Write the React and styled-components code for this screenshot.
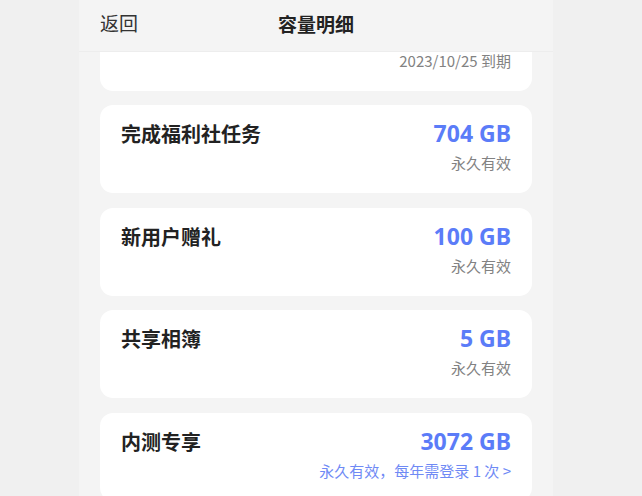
import React from "react";
import styled, { createGlobalStyle } from "styled-components";

const Global = createGlobalStyle`
  html, body { margin: 0; padding: 0; background: #f0f0f0; }
  body { font-family: "Noto Sans", "Noto Sans CJK SC", sans-serif; overflow: hidden; }
`;

const Page = styled.div`
  width: 642px;
  height: 496px;
  box-sizing: border-box;
  padding-left: 79px;
  display: flex;
  background: #f0f0f0;
  overflow: hidden;
`;

const Column = styled.div`
  position: relative;
  width: 474px;
  height: 496px;
  background: #f4f4f4;
  overflow: hidden;
`;

const Header = styled.header`
  position: absolute;
  top: 0;
  left: 0;
  right: 0;
  height: 52px;
  z-index: 2;
  display: flex;
  align-items: center;
  justify-content: center;
  background: rgba(244, 244, 244, 0.97);
  border-bottom: 1px solid #ededed;
  box-sizing: border-box;
`;

const Back = styled.span`
  position: absolute;
  left: 21px;
  top: 11px;
  font-family: "Noto Sans CJK SC", sans-serif;
  font-size: 19px;
  color: #333;
  line-height: 24px;
`;

const Title = styled.h1`
  margin: 0;
  margin-top: -5px;
  font-family: "Noto Sans CJK SC", sans-serif;
  font-size: 19px;
  font-weight: 700;
  color: #222;
`;

const List = styled.div`
  display: flex;
  flex-direction: column;
  gap: 14.6px;
  padding: 2.5px 21px 0 21px;
`;

const Card = styled.div`
  height: 88px;
  box-sizing: border-box;
  background: #fff;
  border-radius: 13px;
  padding: 14px 21px 0 21px;
  display: flex;
  justify-content: space-between;
  align-items: flex-start;
`;

const Name = styled.div`
  font-family: "Noto Sans CJK SC", sans-serif;
  font-size: 20px;
  font-weight: 700;
  color: #222;
  line-height: 30px;
`;

const Right = styled.div`
  display: flex;
  flex-direction: column;
  align-items: flex-end;
`;

const Amount = styled.div`
  font-family: "Noto Sans", "Noto Sans CJK SC", sans-serif;
  font-size: 23px;
  font-weight: 700;
  color: #5b7cf8;
  line-height: 30px;
  margin-top: -1px;
`;

const Note = styled.div`
  font-family: "Noto Sans CJK SC", sans-serif;
  font-size: 15px;
  color: ${(p) => (p.$link ? "#6f8af5" : "#828282")};
  line-height: 22px;
  margin-top: 4px;
  white-space: pre;
`;

const items = [
  { name: "", amount: "", note: "2023/10/25 到期" },
  { name: "完成福利社任务", amount: "704 GB", note: "永久有效" },
  { name: "新用户赠礼", amount: "100 GB", note: "永久有效" },
  { name: "共享相簿", amount: "5 GB", note: "永久有效" },
  { name: "内测专享", amount: "3072 GB", note: "永久有效，每年需登录 1 次 >", link: true },
];

export default function App() {
  return (
    <>
      <Global />
      <Page>
        <Column>
          <Header>
            <Back>返回</Back>
            <Title>容量明细</Title>
          </Header>
          <List>
            {items.map((it, i) => (
              <Card key={i}>
                <Name>{it.name}</Name>
                <Right>
                  <Amount>{it.amount || "\u00a0"}</Amount>
                  <Note $link={it.link}>{it.note}</Note>
                </Right>
              </Card>
            ))}
          </List>
        </Column>
      </Page>
    </>
  );
}
